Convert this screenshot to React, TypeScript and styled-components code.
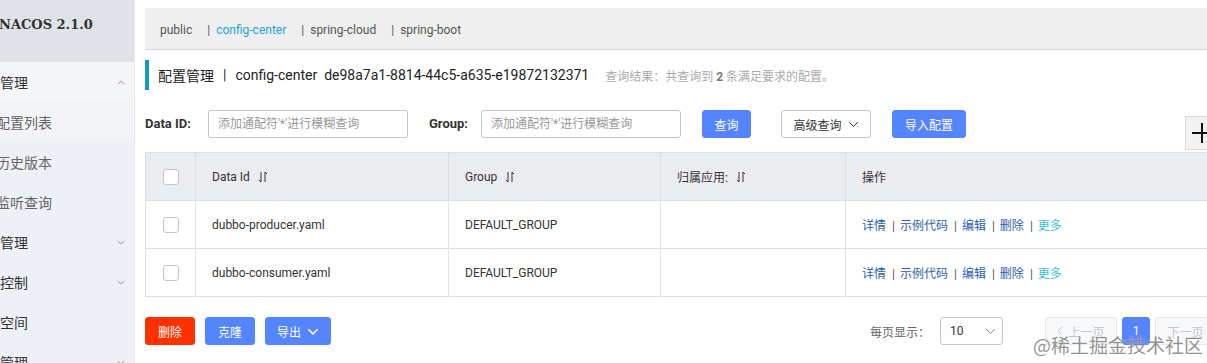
import React from 'react';
import styled, { createGlobalStyle } from 'styled-components';

const GlobalStyle = createGlobalStyle`
  html, body {
    margin: 0;
    padding: 0;
    width: 1207px;
    height: 363px;
    overflow: hidden;
    background: #fff;
  }
  body {
    font-family: Roboto, "Noto Sans CJK SC", sans-serif;
    color: #333;
  }
  * { box-sizing: border-box; }
`;

const BLUE = '#5584ff';

const Page = styled.div`
  position: relative;
  display: flex;
  width: 1207px;
  height: 363px;
  overflow: hidden;
`;

const Sidebar = styled.aside`
  width: 135px;
  flex-shrink: 0;
  background: #edf0f4;
  overflow: hidden;
  border-right: 1px solid #e4e7eb;
`;

const Brand = styled.div`
  height: 62px;
  padding-top: 15px;
  margin-left: -1px;
  background: #dfe3e8;
  font-family: "DejaVu Serif", "Liberation Serif", serif;
  font-weight: bold;
  font-size: 13px;
  line-height: 20px;
  color: #333;
  white-space: nowrap;
`;

const Menu = styled.ul`
  list-style: none;
  margin: 0 0 0 -28px;
  padding: 0;
  width: calc(100% + 28px);
`;

const MenuItem = styled.li<{ $sub?: boolean; $bg?: string }>`
  display: flex;
  align-items: center;
  justify-content: space-between;
  height: 40px;
  padding: 0 9px 0 ${p => (p.$sub ? '24px' : '0')};
  background: ${p => p.$bg || 'transparent'};
  font-size: 14px;
  color: ${p => (p.$sub ? '#666' : '#333')};
  white-space: nowrap;
`;

const Main = styled.main`
  flex: 1;
  min-width: 0;
  overflow: hidden;
  padding: 8px 0 0 10px;
`;

const Content = styled.div`
  width: 1082px;
`;

const NsBar = styled.div`
  display: flex;
  align-items: center;
  height: 42px;
  padding: 2px 0 0 15px;
  background: #efefef;
  border-bottom: 1px solid #d4d4d4;
  font-size: 12px;
  color: #555;
`;

const NsItem = styled.span<{ $active?: boolean }>`
  margin-right: 15px;
  color: ${p => (p.$active ? '#23a3dc' : '#555')};
`;

const NsSep = styled.span`
  color: #555;
  margin-right: 6px;
`;

const TitleRow = styled.div`
  display: flex;
  align-items: center;
  margin-top: 10px;
  height: 30px;
  padding-left: 9px;
  border-left: 4px solid #0d9ac9;
  font-size: 14px;
  color: #222;
  white-space: nowrap;
`;

const TitleSep = styled.span`
  margin: 0 9px;
`;

const Result = styled.span`
  margin-left: 16px;
  font-size: 12px;
  color: #aaa;

  b {
    color: #777;
  }
`;

const FilterRow = styled.div`
  display: flex;
  align-items: flex-start;
  height: 28px;
  margin-top: 20px;
`;

const Label = styled.label<{ $w: number; $ml?: number }>`
  width: ${p => p.$w}px;
  height: 28px;
  line-height: 28px;
  margin-left: ${p => p.$ml || 0}px;
  font-size: 13px;
  font-weight: bold;
  color: #333;
  white-space: nowrap;
`;

const Input = styled.input`
  width: 200px;
  height: 28px;
  padding: 0 9px;
  border: 1px solid #c4c6cf;
  border-radius: 3px;
  font-family: inherit;
  font-size: 12px;
  color: #333;
  outline: none;

  &::placeholder {
    color: #999;
  }
`;

const Button = styled.button<{ $kind?: 'primary' | 'normal' | 'danger'; $w: number; $ml?: number }>`
  display: inline-flex;
  align-items: center;
  justify-content: center;
  gap: 6px;
  width: ${p => p.$w}px;
  height: 28px;
  margin-left: ${p => p.$ml || 0}px;
  padding: 0;
  border-radius: 3px;
  font-family: inherit;
  font-size: 12px;
  cursor: pointer;
  border: 1px solid
    ${p => (p.$kind === 'normal' ? '#c4c6cf' : p.$kind === 'danger' ? '#ff3000' : BLUE)};
  background: ${p => (p.$kind === 'normal' ? '#fff' : p.$kind === 'danger' ? '#ff3000' : BLUE)};
  color: ${p => (p.$kind === 'normal' ? '#333' : '#fff')};
`;

const PlusButton = styled.div`
  margin-left: auto;
  margin-top: 6px;
  width: 42px;
  height: 34px;
  display: flex;
  align-items: center;
  padding-left: 4px;
  background: #f2f2f2;
  border: 1px solid #dcdcdc;
`;

const Table = styled.table`
  margin-top: 14px;
  width: 1082px;
  table-layout: fixed;
  border-collapse: collapse;
  font-size: 12px;
  color: #333;
  border: 1px solid #dcdee3;
`;

const Th = styled.th`
  height: 48px;
  padding: 0 16px;
  background: #ebecf0;
  border-right: 1px solid #dcdee3;
  text-align: left;
  font-weight: normal;
  white-space: nowrap;
`;

const Td = styled.td`
  height: 48px;
  padding: 0 16px;
  border-top: 1px solid #dcdee3;
  border-right: 1px solid #e3e4e8;
  white-space: nowrap;
`;

const CheckCell = styled.div`
  display: flex;
  justify-content: center;
  margin-left: 1px;
`;

const Checkbox = styled.span`
  display: block;
  width: 16px;
  height: 16px;
  border: 1px solid #c4c6cf;
  border-radius: 3px;
  background: #fff;
`;

const HeadText = styled.span`
  display: inline-flex;
  align-items: center;
  gap: 8px;
`;

const Actions = styled.span`
  color: #333;
`;

const ActionLink = styled.a<{ $more?: boolean }>`
  color: ${p => (p.$more ? '#3cc1d2' : '#2a5fae')};
  text-decoration: none;
`;

const ActionSep = styled.span`
  margin: 0 5px 0 6px;
  color: #555;
`;

const Footer = styled.div`
  display: flex;
  align-items: center;
  justify-content: space-between;
  margin-top: 20px;
`;

const ButtonGroup = styled.div`
  display: flex;
  gap: 10px;
`;

const Pager = styled.div`
  display: flex;
  align-items: center;
  font-size: 12px;
`;

const PagerLabel = styled.span`
  color: #666;
  margin-right: 10px;
`;

const Select = styled.div`
  display: flex;
  align-items: center;
  justify-content: space-between;
  width: 63px;
  height: 28px;
  padding: 0 6px 0 9px;
  border: 1px solid #c4c6cf;
  border-radius: 3px;
  color: #333;
`;

const PageBtn = styled.div<{ $current?: boolean; $w: number; $ml: number }>`
  display: flex;
  align-items: center;
  justify-content: center;
  gap: 5px;
  width: ${p => p.$w}px;
  height: 28px;
  margin-left: ${p => p.$ml}px;
  border-radius: 3px;
  border: 1px solid ${p => (p.$current ? BLUE : '#e6e7eb')};
  background: ${p => (p.$current ? BLUE : '#f7f8fa')};
  color: ${p => (p.$current ? '#fff' : '#c4c6cf')};
`;

const Watermark = styled.div`
  position: absolute;
  left: 1033px;
  top: 333px;
  font-family: "Noto Sans CJK SC", sans-serif;
  font-size: 19px;
  line-height: 24px;
  color: rgba(110, 110, 110, 0.75);
  text-shadow: 0 0 2px rgba(255, 255, 255, 0.8);
  pointer-events: none;
  white-space: nowrap;
`;

const Chevron = ({ up, color = '#999', w = 8, sw = 1 }: { up?: boolean; color?: string; w?: number; sw?: number }) => (
  <svg width={w} height={w / 2 + 1} viewBox="0 0 10 6" fill="none">
    <polyline
      points={up ? '1,5 5,1 9,5' : '1,1 5,5 9,1'}
      stroke={color}
      strokeWidth={sw}
      vectorEffect="non-scaling-stroke"
    />
  </svg>
);

const SortIcon = () => (
  <svg width="10" height="12" viewBox="0 0 10 12" fill="none" stroke="#333" strokeWidth="1">
    <path d="M3 1 V11 L1 9" />
    <path d="M7 11 V1 L9 3" />
  </svg>
);

const Arrow = ({ left }: { left?: boolean }) => (
  <svg width="6" height="10" viewBox="0 0 6 10" fill="none" stroke="#c4c6cf" strokeWidth="1">
    <polyline points={left ? '5,1 1,5 5,9' : '1,1 5,5 1,9'} />
  </svg>
);

const PlusIcon = () => (
  <svg width="24" height="24" viewBox="0 0 24 24" fill="none" stroke="#111" strokeWidth="2">
    <path d="M12 2 V22 M2 12 H22" />
  </svg>
);

const namespaces = ['public', 'config-center', 'spring-cloud', 'spring-boot'];

const rows = [
  { id: 'dubbo-producer.yaml', group: 'DEFAULT_GROUP' },
  { id: 'dubbo-consumer.yaml', group: 'DEFAULT_GROUP' },
];

const App: React.FC = () => {
  return (
    <Page>
      <GlobalStyle />
      <Sidebar>
        <Brand>NACOS 2.1.0</Brand>
        <Menu>
          <MenuItem $bg="#f3f5f7">
            配置管理 <Chevron up />
          </MenuItem>
          <MenuItem $sub $bg="#f1f3f6">配置列表</MenuItem>
          <MenuItem $sub>历史版本</MenuItem>
          <MenuItem $sub>监听查询</MenuItem>
          <MenuItem>
            服务管理 <Chevron />
          </MenuItem>
          <MenuItem>
            权限控制 <Chevron />
          </MenuItem>
          <MenuItem>命名空间</MenuItem>
          <MenuItem>
            集群管理 <Chevron />
          </MenuItem>
        </Menu>
      </Sidebar>

      <Main>
        <Content>
          <NsBar>
            {namespaces.map((ns, i) => (
              <NsItem key={ns} $active={ns === 'config-center'}>
                {i > 0 && <NsSep>|</NsSep>}
                {ns}
              </NsItem>
            ))}
          </NsBar>

          <TitleRow>
            配置管理<TitleSep>|</TitleSep>config-center&nbsp;&nbsp;de98a7a1-8814-44c5-a635-e19872132371
            <Result>
              查询结果：共查询到 <b>2</b> 条满足要求的配置。
            </Result>
          </TitleRow>

          <FilterRow>
            <Label $w={63}>Data ID:</Label>
            <Input placeholder="添加通配符'*'进行模糊查询" />
            <Label $w={52} $ml={21}>Group:</Label>
            <Input placeholder="添加通配符'*'进行模糊查询" />
            <Button $w={49} $ml={21}>查询</Button>
            <Button $kind="normal" $w={90} $ml={30}>
              高级查询 <Chevron color="#333" w={11} />
            </Button>
            <Button $w={74} $ml={21}>导入配置</Button>
            <PlusButton>
              <PlusIcon />
            </PlusButton>
          </FilterRow>

          <Table>
            <colgroup>
              <col style={{ width: 50 }} />
              <col style={{ width: 253 }} />
              <col style={{ width: 212 }} />
              <col style={{ width: 185 }} />
              <col />
            </colgroup>
            <thead>
              <tr>
                <Th style={{ padding: 0 }}>
                  <CheckCell>
                    <Checkbox />
                  </CheckCell>
                </Th>
                <Th>
                  <HeadText>
                    Data Id <SortIcon />
                  </HeadText>
                </Th>
                <Th>
                  <HeadText>
                    Group <SortIcon />
                  </HeadText>
                </Th>
                <Th>
                  <HeadText>
                    归属应用: <SortIcon />
                  </HeadText>
                </Th>
                <Th>操作</Th>
              </tr>
            </thead>
            <tbody>
              {rows.map(r => (
                <tr key={r.id}>
                  <Td style={{ padding: 0 }}>
                    <CheckCell>
                      <Checkbox />
                    </CheckCell>
                  </Td>
                  <Td>{r.id}</Td>
                  <Td>{r.group}</Td>
                  <Td />
                  <Td>
                    <Actions>
                      <ActionLink>详情</ActionLink>
                      <ActionSep>|</ActionSep>
                      <ActionLink>示例代码</ActionLink>
                      <ActionSep>|</ActionSep>
                      <ActionLink>编辑</ActionLink>
                      <ActionSep>|</ActionSep>
                      <ActionLink>删除</ActionLink>
                      <ActionSep>|</ActionSep>
                      <ActionLink $more>更多</ActionLink>
                    </Actions>
                  </Td>
                </tr>
              ))}
            </tbody>
          </Table>

          <Footer>
            <ButtonGroup>
              <Button $kind="danger" $w={50}>删除</Button>
              <Button $w={50}>克隆</Button>
              <Button $w={66}>
                导出 <Chevron color="#fff" w={12} sw={1.5} />
              </Button>
            </ButtonGroup>
            <Pager>
              <PagerLabel>每页显示：</PagerLabel>
              <Select>
                10 <Chevron w={11} color="#888" />
              </Select>
              <PageBtn $w={72} $ml={42}>
                <Arrow left /> 上一页
              </PageBtn>
              <PageBtn $current $w={28} $ml={5}>
                1
              </PageBtn>
              <PageBtn $w={72} $ml={5}>
                下一页 <Arrow />
              </PageBtn>
            </Pager>
          </Footer>
        </Content>
      </Main>

      <Watermark>@稀土掘金技术社区</Watermark>
    </Page>
  );
};

export default App;
